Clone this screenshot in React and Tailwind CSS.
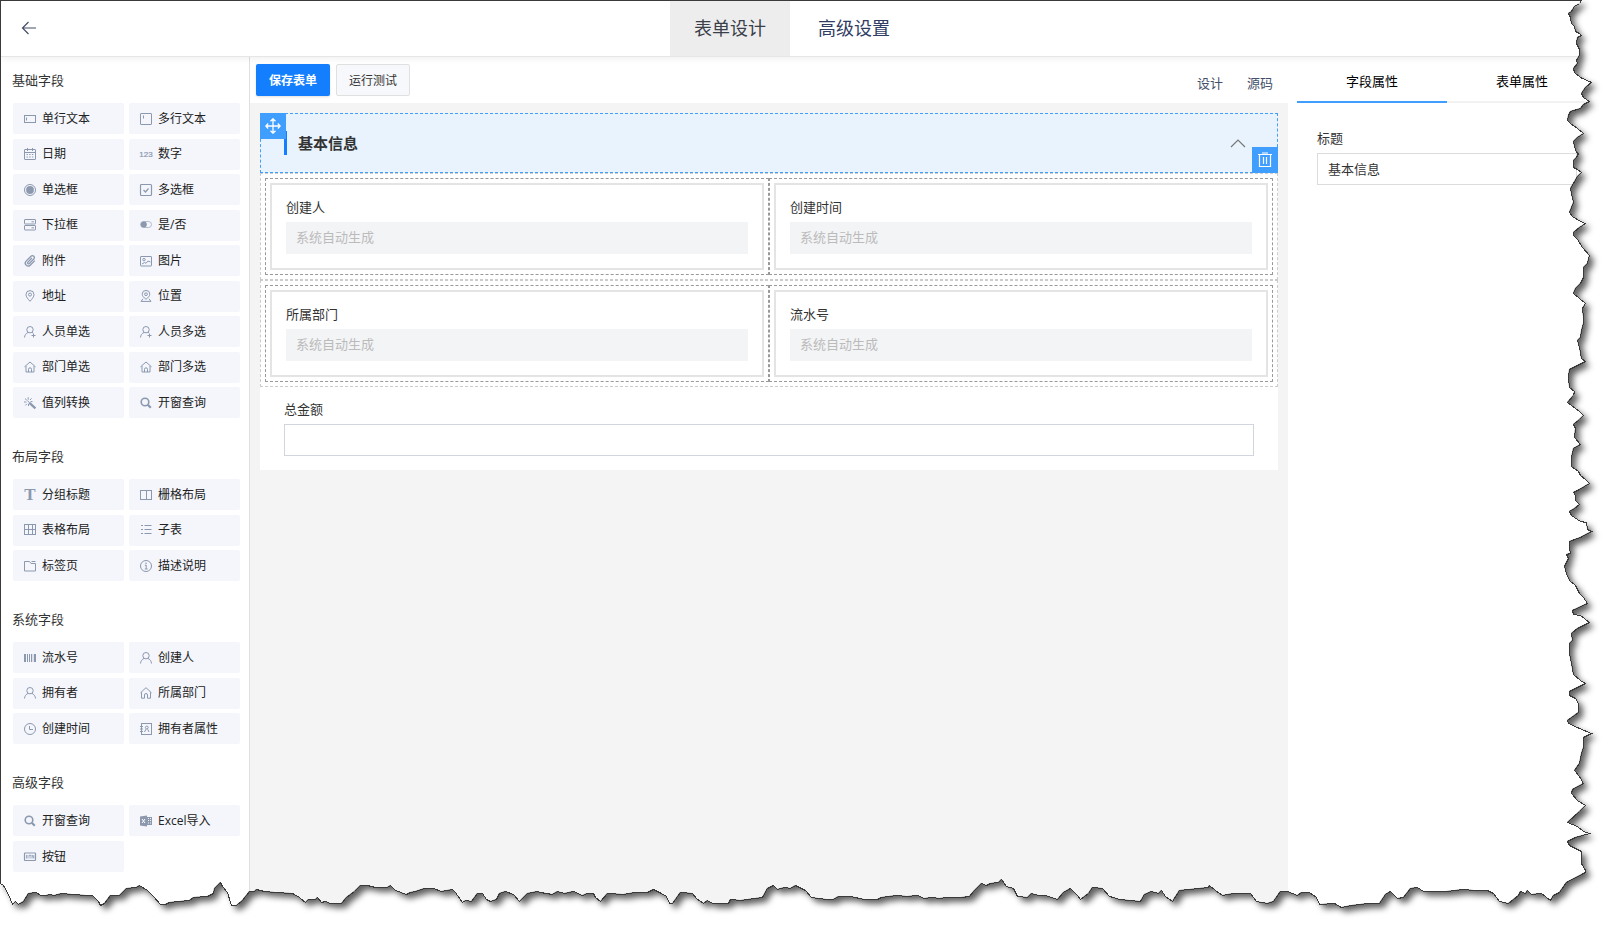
import { useState } from 'react';
import clsx from 'clsx';

const ICONS = {
  input: (
    <>
      <rect x="0.5" y="2.5" width="11" height="7" />
      <path d="M2.5 4.5v3" />
    </>
  ),
  textarea: (
    <>
      <rect x="0.5" y="0.5" width="11" height="11" rx="0.5" />
      <path d="M3.5 2.5v3" />
    </>
  ),
  date: (
    <>
      <rect x="0.5" y="1.5" width="11" height="10" rx="0.5" />
      <path d="M0.5 4.5h11M3.5 0v3M8.5 0v3" />
      <path d="M2.5 6.5h7M2.5 9h7" strokeDasharray="1.4 1.3" />
    </>
  ),
  number: (
    <text
      x="6"
      y="9"
      textAnchor="middle"
      fontSize="8"
      fontFamily="Liberation Sans, sans-serif"
      fill="currentColor"
      stroke="currentColor"
      strokeWidth="0.2"
    >
      123
    </text>
  ),
  radio: (
    <>
      <circle cx="6" cy="6" r="5.5" />
      <circle cx="6" cy="6" r="3.9" fill="currentColor" stroke="none" />
    </>
  ),
  checkbox: (
    <>
      <rect x="0.5" y="0.5" width="11" height="11" rx="1" strokeWidth="1.2" />
      <path d="M3.5 6l2 2 3-3.5" strokeWidth="1.2" />
    </>
  ),
  select: (
    <>
      <rect x="0.5" y="0.5" width="11" height="4.5" rx="0.5" />
      <rect x="0.5" y="6.5" width="11" height="4.5" rx="0.5" />
      <path d="M7.5 2.8h2.5M7.5 8.8h2.5" />
    </>
  ),
  switch: (
    <>
      <rect x="0.5" y="2.5" width="11" height="6" rx="3" strokeOpacity="0.6" />
      <circle cx="3.8" cy="5.5" r="3" fill="currentColor" stroke="none" />
    </>
  ),
  attachment: (
    <path
      d="M10.8 5.6L6.2 10.2a2.9 2.9 0 0 1-4.1-4.1l4.9-4.9a1.9 1.9 0 0 1 2.8 2.8L5.1 8.7a1 1 0 0 1-1.4-1.4L7.9 3"
      strokeWidth="1.3"
    />
  ),
  image: (
    <>
      <rect x="0.5" y="1.5" width="11" height="9.5" rx="0.5" />
      <circle cx="4" cy="4.6" r="1.2" />
      <path d="M2 9l2.5-1.5 1.5.8 2-2.3 2.5 1" />
    </>
  ),
  address: (
    <>
      <path d="M6 11.3C3.6 8.6 2 6.6 2 4.6a4 4 0 0 1 8 0c0 2-1.6 4-4 6.7z" />
      <circle cx="6" cy="4.6" r="1.5" />
    </>
  ),
  location: (
    <>
      <path d="M6 9.3C3.6 7.4 2.2 5.9 2.2 4.2a3.8 3.8 0 0 1 7.6 0c0 1.7-1.4 3.2-3.8 5.1z" />
      <circle cx="6" cy="4.2" r="1.4" />
      <path d="M3 8.8L1 11.4h10L9 8.8" />
    </>
  ),
  userPlus: (
    <>
      <circle cx="6" cy="3.7" r="3.2" />
      <path d="M0.5 11.5c.2-2.4 1.5-4.2 3.5-5M8 6.3l1 .7M9.5 7.5v4M7.5 9.5h4" />
    </>
  ),
  department: (
    <>
      <path d="M0.5 5.8L6 1l5.5 4.8M2 5v6h8V5" />
      <path d="M4.5 11V8.3a1.5 1.5 0 0 1 3 0V11" />
    </>
  ),
  wand: (
    <>
      <path d="M5.2 5.6l6.2 5.8" strokeWidth="2.2" />
      <path d="M4.2 0.3v2.4M1 1.6l1.8 1.6M0 5h2.4M1.4 8.4l1.5-1.6M4.5 9V7M7.6 1.4L6 3M8.5 4.6H6.6M3.4 3.6l1.6 1.6" />
    </>
  ),
  search: (
    <>
      <circle cx="5" cy="5" r="3.8" strokeWidth="1.6" />
      <path d="M7.8 7.8l3 3" strokeWidth="2.2" />
    </>
  ),
  title: (
    <text
      x="6"
      y="11"
      textAnchor="middle"
      fontSize="17"
      fontWeight="700"
      fontFamily="Liberation Serif, serif"
      fill="currentColor"
      stroke="none"
    >
      T
    </text>
  ),
  columns: (
    <>
      <rect x="0.5" y="1.5" width="11" height="9" />
      <path d="M6.5 1.5v9" />
    </>
  ),
  table: (
    <>
      <rect x="0.5" y="0.5" width="11" height="10" />
      <path d="M0.5 5.5h11M4.5 0.5v10M8.5 0.5v10" />
    </>
  ),
  list: <path d="M1 1.5h2M1 5.5h2M1 9.5h2M4.5 1.5h7M4.5 5.5h7M4.5 9.5h7" />,
  tabs: (
    <>
      <path d="M0.5 1.5h5l1.5 2h4.5v7.5h-11z" />
      <path d="M7.5 1.5h4" />
    </>
  ),
  info: (
    <>
      <circle cx="6" cy="6" r="5.5" />
      <path d="M6.2 5v4M4.8 5.2h1.4M4.8 9h2.8" />
      <circle cx="6" cy="3.2" r="0.8" fill="currentColor" stroke="none" />
    </>
  ),
  serial: (
    <>
      <path d="M1 2v8M11 2v8" strokeWidth="2" />
      <path d="M3.5 2v8M5.5 2v8M7.5 2v8" />
      <path d="M9 2v8" strokeOpacity="0.4" />
    </>
  ),
  user: (
    <>
      <circle cx="6" cy="3.7" r="3.2" />
      <path d="M0.5 11.5c.2-2.5 1.6-4.3 3.6-5.1M11.5 11.5c-.2-2.5-1.6-4.3-3.6-5.1" />
    </>
  ),
  home: <path d="M0.5 5.8L6 0.7l5.5 5.1M1.5 5.2v6h3V8a1.5 1.5 0 0 1 3 0v3.2h3v-6" />,
  clock: (
    <>
      <circle cx="6" cy="6" r="5.5" />
      <path d="M5.5 3v3.5H9" />
    </>
  ),
  contacts: (
    <>
      <rect x="1.5" y="0.5" width="10" height="11" />
      <path d="M0 3.5h3M0 6h3M0 8.5h3" />
      <circle cx="6.8" cy="4.5" r="1.4" />
      <path d="M4.5 9l1.5-2.8M9 9L7.6 6.2" />
    </>
  ),
  excel: (
    <>
      <path d="M0 1.5L7 0.5v11L0 10.5z" fill="currentColor" stroke="none" />
      <path d="M2 4l3 4M5 4L2 8" stroke="#fff" />
      <rect x="7.5" y="2.5" width="4" height="7" />
      <path d="M8 4.5h3M8 6.5h3M8 8h3M9.5 3v6" />
    </>
  ),
  button: (
    <>
      <rect x="0.5" y="2" width="11" height="7.5" rx="0.5" strokeWidth="1.2" />
      <path d="M2.5 4v3.5M4 4v3.5M5 4.3h2M6 4.3v3.2M8 7.5V4l1.8 3.3V4" strokeWidth="0.8" />
    </>
  ),
};

const GROUPS = [
  {
    title: '基础字段',
    minHeight: 'min-h-[315px]',
    fields: [
      ['input', '单行文本'],
      ['textarea', '多行文本'],
      ['date', '日期'],
      ['number', '数字'],
      ['radio', '单选框'],
      ['checkbox', '多选框'],
      ['select', '下拉框'],
      ['switch', '是/否'],
      ['attachment', '附件'],
      ['image', '图片'],
      ['address', '地址'],
      ['location', '位置'],
      ['userPlus', '人员单选'],
      ['userPlus', '人员多选'],
      ['department', '部门单选'],
      ['department', '部门多选'],
      ['wand', '值列转换'],
      ['search', '开窗查询'],
    ],
  },
  {
    title: '布局字段',
    minHeight: 'min-h-[102px]',
    fields: [
      ['title', '分组标题'],
      ['columns', '栅格布局'],
      ['table', '表格布局'],
      ['list', '子表'],
      ['tabs', '标签页'],
      ['info', '描述说明'],
    ],
  },
  {
    title: '系统字段',
    minHeight: 'min-h-[102px]',
    fields: [
      ['serial', '流水号'],
      ['user', '创建人'],
      ['user', '拥有者'],
      ['home', '所属部门'],
      ['clock', '创建时间'],
      ['contacts', '拥有者属性'],
    ],
  },
  {
    title: '高级字段',
    minHeight: 'min-h-[67px]',
    fields: [
      ['search', '开窗查询'],
      ['excel', 'Excel导入'],
      ['button', '按钮'],
    ],
  },
];

const ROWS = [
  [
    { id: 'creator', label: '创建人' },
    { id: 'createdAt', label: '创建时间' },
  ],
  [
    { id: 'dept', label: '所属部门' },
    { id: 'serialNo', label: '流水号' },
  ],
];

// Torn paper edge. Each strip is [origin x, origin y, x scale, y scale, points].
const RIGHT_EDGE = [
  [1500, 0, 3, 3, '242,0 238,8 222,18 214,32 204,38 210,50 212,70 222,78 226,92 238,98 242,104 230,112 228,130 236,148 236,165 228,180 230,190 220,205 222,215 240,230 274,246 256,260 244,278 250,292 268,304 250,312 240,324 210,334 204,345 200,360 210,370 232,385 248,400 232,412 218,424 222,438 228,455 234,458 228,470 218,480 220,500 232,508 242,516 232,528 220,548 210,565 214,580 220,605 214,620 206,635 216,648 240,662 256,670 236,682 220,696 218,706 232,718 246,740 268,764 262,790 250,800 250,830 240,848 226,864 218,880 236,895 256,908 246,925 250,950 248,970 242,990 240,1010 232,1020 236,1040 242,1075 254,1084 206,1108 204,1130 206,1160 222,1172 218,1186 202,1206 212,1216 236,1232 250,1244 236,1258 218,1272 226,1285 222,1310 240,1332 220,1345 212,1370 214,1398 234,1412 240,1425 256,1438'],
  [1500, 470, 3, 3, '268,38 236,56 218,66 226,76 224,90 236,102 222,115 208,122 212,136 240,152 258,156 262,176 274,184 240,200 206,214 208,235 210,248 198,252 204,265 192,288 198,310 208,330 224,344 236,368 250,380 260,400 216,420 218,432 240,436 268,456 232,474 212,490 216,510 206,520 208,550 214,580 218,612 240,630 254,638 206,664 208,676 224,684 234,700 234,725 202,750 204,760 236,774 274,788 250,802 250,830 242,850 236,880 222,900 238,918 250,938 216,956 214,970 232,990 256,1004 236,1024 200,1056 230,1068 250,1082 268,1088 226,1102 202,1114 206,1126 242,1144 242,1180 256,1200 256,1206 198,1236 176,1266 160,1276 150,1290'],
];
const BOTTOM_EDGE = [
  [0, 860, 2.904, 3, '0,68 8,74 20,95 28,118 34,132 44,124 52,132 66,122 80,98 104,96 116,104 134,106 142,102 156,106 178,98 210,102 250,104 268,104 284,124 290,136 302,130 318,106 346,104 366,84 394,82 404,76 426,90 444,108 466,132 480,132 490,126 520,124 548,120 560,112 600,108 618,98 622,84 640,66 644,78 658,96 672,134 686,134 704,120 722,94 738,94 744,88 768,92 800,96 848,98 868,112 886,126 894,118 914,118 922,110 932,126 944,124 958,130 990,130 1004,110 1028,92 1046,74 1066,74 1090,80 1124,80 1134,76 1148,90 1180,102 1192,96 1206,94 1232,84 1256,84 1280,94 1314,86 1322,96 1342,126 1350,120 1368,122 1384,98 1400,98 1410,116 1424,124 1440,118 1450,98 1466,92 1490,102 1508,124 1530,98 1560,92'],
  [540, 860, 2.904, 3, '0,96 34,102 50,92 70,98 96,94 122,106 136,98 154,98 160,112 174,124 196,98 240,102 276,96 310,96 328,88 350,98 366,108 376,128 384,128 408,96 440,98 452,114 472,130 484,120 500,128 546,128 552,118 580,120 644,110 660,84 676,76 688,86 710,80 726,84 740,76 770,90 786,110 830,116 850,116 866,108 900,108 940,118 980,116 990,110 1034,104 1066,108 1096,106 1116,114 1136,110 1160,114 1182,110 1224,112 1246,108 1260,90 1280,70 1296,76 1306,68 1330,66 1340,58 1354,78 1374,84 1384,108 1414,110 1426,100 1446,106 1466,104 1500,118 1518,96 1540,84 1560,104'],
  [1080, 860, 2.947, 3, '0,118 24,100 36,82 66,84 84,108 96,112 116,118 178,122 190,102 210,94 230,98 240,90 250,108 270,122 292,90 320,86 376,80 380,74 398,90 418,106 450,98 500,98 518,122 550,128 568,124 588,94 610,92 640,104 650,96 676,96 696,112 704,132 750,130 770,140 800,136 850,130 880,128 900,102 914,92 934,114 952,110 972,84 992,80 1010,92 1080,94 1130,88 1160,90 1200,90 1216,98 1236,124 1262,128 1290,104 1296,94 1310,98 1318,90 1328,102 1360,98'],
];

const toPoints = (strips) =>
  strips.flatMap(([ox, oy, sx, sy, points]) =>
    points.split(' ').map((pair) => {
      const [x, y] = pair.split(',').map(Number);
      return `${Math.round(ox + x / sx)} ${Math.round(oy + y / sy)}`;
    })
  );

const PAPER = `M0 0L${[...toPoints(RIGHT_EDGE), ...toPoints(BOTTOM_EDGE).reverse()].join('L')}Z`;

function TornEdge() {
  return (
    <svg
      className="pointer-events-none absolute inset-0 z-30 size-full"
      viewBox="0 0 1612 928"
      preserveAspectRatio="none"
      aria-hidden="true"
    >
      <defs>
        <clipPath id="outside">
          <path clipRule="evenodd" d={`M-10 -10H1630V940H-10Z${PAPER}`} />
        </clipPath>
        <filter id="soft" x="-5%" y="-5%" width="110%" height="110%">
          <feGaussianBlur stdDeviation="3" />
        </filter>
      </defs>
      <g clipPath="url(#outside)">
        <rect width="1612" height="928" fill="#fff" />
        <path d={PAPER} transform="translate(5 5)" fill="#000" fillOpacity="0.62" filter="url(#soft)" />
      </g>
      <path d={PAPER} transform="translate(0.5 0.5)" fill="none" stroke="#3a3a3a" shapeRendering="crispEdges" />
    </svg>
  );
}

function FieldIcon({ name }) {
  return (
    <svg
      className="size-3 shrink-0 overflow-visible text-[#8c98ae]"
      viewBox="0 0 12 12"
      fill="none"
      stroke="currentColor"
      aria-hidden="true"
    >
      {ICONS[name]}
    </svg>
  );
}

function FieldGroup({ group }) {
  return (
    <section>
      <h3 className="mb-3 pb-0.5 text-[13px] leading-[18px] text-[#333]">{group.title}</h3>
      <div className={clsx('grid grid-cols-2 content-between gap-x-[5px] px-px', group.minHeight)}>
        {group.fields.map(([icon, label]) => (
          <button
            key={label}
            type="button"
            className="flex h-[31px] items-center gap-1.5 rounded-xs bg-[#f4f6fc] pl-[11px] text-xs text-[#222]"
          >
            <FieldIcon name={icon} />
            {label}
          </button>
        ))}
      </div>
    </section>
  );
}

function SystemField({ field }) {
  return (
    <div className="border border-dashed border-[#999] p-1">
      <div className="border-2 border-[#e4e4e4] px-3.5 pt-[13px] pb-3.5">
        <label htmlFor={field.id} className="mb-1 block pb-0.5 text-[13px] leading-[18px] text-[#333]">
          {field.label}
        </label>
        <input
          id={field.id}
          type="text"
          readOnly
          placeholder="系统自动生成"
          className="block h-8 w-full bg-[#f3f4f6] px-2.5 pb-0.5 text-[13px] placeholder:text-[#bbb]"
        />
      </div>
    </div>
  );
}

export default function App() {
  const [title, setTitle] = useState('基本信息');
  const [total, setTotal] = useState('');

  return (
    <div className="relative flex min-h-screen flex-col overflow-hidden bg-white pt-px pl-px font-['Open_Sans','Noto_Sans_CJK_SC',sans-serif]">
      {/* Header */}
      <header className="relative z-10 grid grid-cols-[1fr_auto_1fr] items-center border-b border-[#e6e6e6] bg-white pr-[29px] shadow-[0_2px_6px_rgba(0,0,0,0.06)]">
        <button type="button" aria-label="返回" className="ml-5 w-fit pb-0.5 text-[#454f69]">
          <svg className="h-4 w-4" viewBox="0 0 16 16" fill="none" stroke="currentColor" strokeWidth="1.2">
            <path d="M15 8H1.5M7.5 2L1.5 8l6 6" />
          </svg>
        </button>
        <nav className="flex gap-1 text-lg">
          <button type="button" className="h-[55px] w-[120px] bg-[#ededed] pb-0.5 text-[#3a3f4a]">
            表单设计
          </button>
          <button type="button" className="h-[55px] w-[120px] pb-0.5 text-[#2f3c63]">
            高级设置
          </button>
        </nav>
      </header>

      <div className="flex flex-1">
        {/* Field palette */}
        <aside className="flex w-[249px] shrink-0 flex-col gap-[29px] border-r border-[#dfdfdf] pt-3.5 pr-2 pl-[11px]">
          {GROUPS.map((group) => (
            <FieldGroup key={group.title} group={group} />
          ))}
        </aside>

        {/* Form canvas */}
        <main className="flex min-w-0 flex-1 flex-col bg-[#f4f4f4]">
          <div className="flex h-[46px] items-center bg-white px-1.5">
            <button
              type="button"
              className="mb-px h-8 w-[74px] rounded-xs bg-[#137fff] pt-0.5 text-xs font-bold text-white shadow-sm"
            >
              保存表单
            </button>
            <button
              type="button"
              className="mb-px ml-1.5 h-8 w-[74px] rounded-xs border border-[#e0e0e0] bg-[#f7f8fb] pt-0.5 text-xs text-[#333]"
            >
              运行测试
            </button>
            <div className="mt-2 mr-[9px] ml-auto flex gap-6 text-[13px] text-[#454f69]">
              <button type="button">设计</button>
              <button type="button">源码</button>
            </div>
          </div>

          <div className="p-2.5">
            <div className="bg-white">
              <div className="relative flex h-[60px] items-center justify-between border border-dashed border-[#409eff] bg-[#e8f3fe] pr-[31px] pl-[23px]">
                <h2 className="flex h-6 items-center border-l-[3px] border-[#137fff] pl-[11px] text-[15px] font-bold text-[#333]">
                  基本信息
                </h2>
                <button type="button" aria-label="收起" className="text-[#777]">
                  <svg className="h-4 w-4" viewBox="0 0 16 16" fill="none" stroke="currentColor" strokeWidth="1.2">
                    <path d="M1 12l7-7 7 7" />
                  </svg>
                </button>
                <button
                  type="button"
                  aria-label="移动"
                  className="absolute -top-px -left-px flex size-[26px] items-center justify-center bg-[#409eff] text-white"
                >
                  <svg className="h-4 w-4" viewBox="0 0 16 16" fill="none" stroke="currentColor" strokeWidth="1.3">
                    <path d="M8 1v14M1 8h14M5.5 3.2L8 0.8l2.5 2.4M5.5 12.8L8 15.2l2.5-2.4M3.2 5.5L0.8 8l2.4 2.5M12.8 5.5L15.2 8l-2.4 2.5" />
                  </svg>
                </button>
                <button
                  type="button"
                  aria-label="删除"
                  className="absolute -right-px -bottom-px flex size-[26px] items-center justify-center bg-[#409eff] text-white"
                >
                  <svg className="h-4 w-4" viewBox="0 0 16 16" fill="none" stroke="currentColor">
                    <path d="M1 2.5h14M5 1h6M2.5 2.5v12h11v-12M6.5 5v7M9.5 5v7" strokeWidth="1.2" />
                  </svg>
                </button>
              </div>

              {ROWS.map((row) => (
                <div key={row[0].id} className="grid grid-cols-2 border border-dashed border-[#ccc] p-1">
                  {row.map((field) => (
                    <SystemField key={field.id} field={field} />
                  ))}
                </div>
              ))}

              <div className="px-6 pt-[13px] pb-3.5">
                <label htmlFor="total" className="mb-1 block pb-0.5 text-[13px] leading-[18px] text-[#333]">
                  总金额
                </label>
                <input
                  id="total"
                  type="text"
                  value={total}
                  onChange={(e) => setTotal(e.target.value)}
                  className="block h-8 w-full border border-[#d2d4de] px-2.5 pb-0.5 text-[13px]"
                />
              </div>
            </div>
          </div>
        </main>

        {/* Properties */}
        <aside className="w-[324px] shrink-0 pr-[15px] pl-[9px]">
          <div className="grid h-[46px] grid-cols-2 text-[13px] text-black">
            <button type="button" className="border-b-2 border-[#409eff] pt-1.5">
              字段属性
            </button>
            <button type="button" className="border-b-2 border-[#f2f2f2] pt-1.5">
              表单属性
            </button>
          </div>
          <div className="px-5 pt-[26px]">
            <label htmlFor="title" className="mb-1 block pb-0.5 text-[13px] leading-[18px] text-[#333]">
              标题
            </label>
            <input
              id="title"
              type="text"
              value={title}
              onChange={(e) => setTitle(e.target.value)}
              className="block h-8 w-full border border-[#dcdcdc] px-2.5 pb-0.5 text-[13px] text-[#333]"
            />
          </div>
        </aside>
      </div>

      <TornEdge />
    </div>
  );
}
